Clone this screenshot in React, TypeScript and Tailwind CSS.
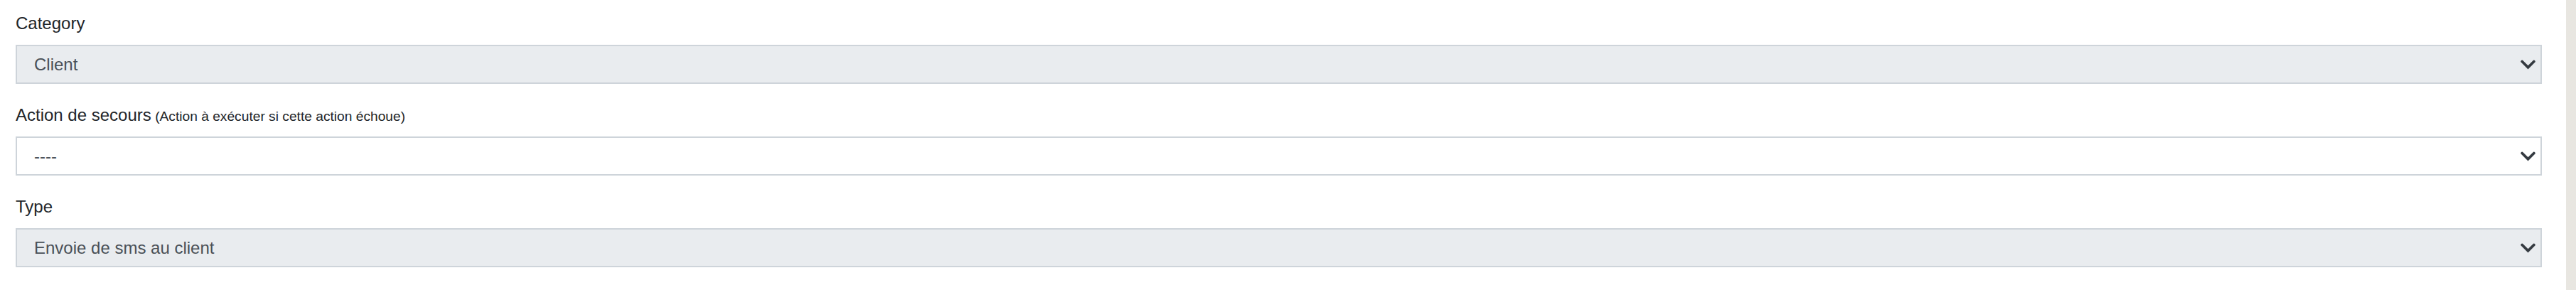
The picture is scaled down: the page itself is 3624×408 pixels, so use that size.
import React from "react";

const font = { fontFamily: '"Liberation Sans", Arial, Helvetica, sans-serif' };

function Chevron() {
    return (
        <svg viewBox="0 0 16 16" className="w-[23px] h-[23px] shrink-0" fill="none">
            <path d="m2.2 5.2 5.8 5.8 5.8-5.8" stroke="#343a40" strokeWidth="2.6" strokeLinecap="round" strokeLinejoin="miter" />
        </svg>
    );
}

function SelectBox({ value, disabled }: { value: string; disabled?: boolean }) {
    return (
        <div
            className={
                "flex items-center justify-between h-[55px] border-2 border-[#ced4da] pl-[24px] pr-[6px] text-[24px] text-[#495057] " +
                (disabled ? "bg-[#e9ecef]" : "bg-white")
            }
        >
            <span className="leading-none">{value}</span>
            <Chevron />
        </div>
    );
}

function Field({ label, hint, value, disabled }: { label: string; hint?: string; value: string; disabled?: boolean }) {
    return (
        <div className="mb-[27px]">
            <label className="block h-[34px] leading-[34px] mb-[13px] text-[24px] text-[#212529]">
                {label}
                {hint && <small className="text-[19.2px]"> {hint}</small>}
            </label>
            <SelectBox value={value} disabled={disabled} />
        </div>
    );
}

export default function App() {
    return (
        <div className="flex h-[408px] w-full bg-white" style={font}>
            <main className="flex-1 pt-[16px] pl-[22px] pr-[34px]">
                <Field label="Category" value="Client" disabled />
                <Field label="Action de secours" hint="(Action à exécuter si cette action échoue)" value="----" />
                <Field label="Type" value="Envoie de sms au client" disabled />
            </main>
            <div className="w-[14px] bg-[#e8e6e1]" />
        </div>
    );
}
